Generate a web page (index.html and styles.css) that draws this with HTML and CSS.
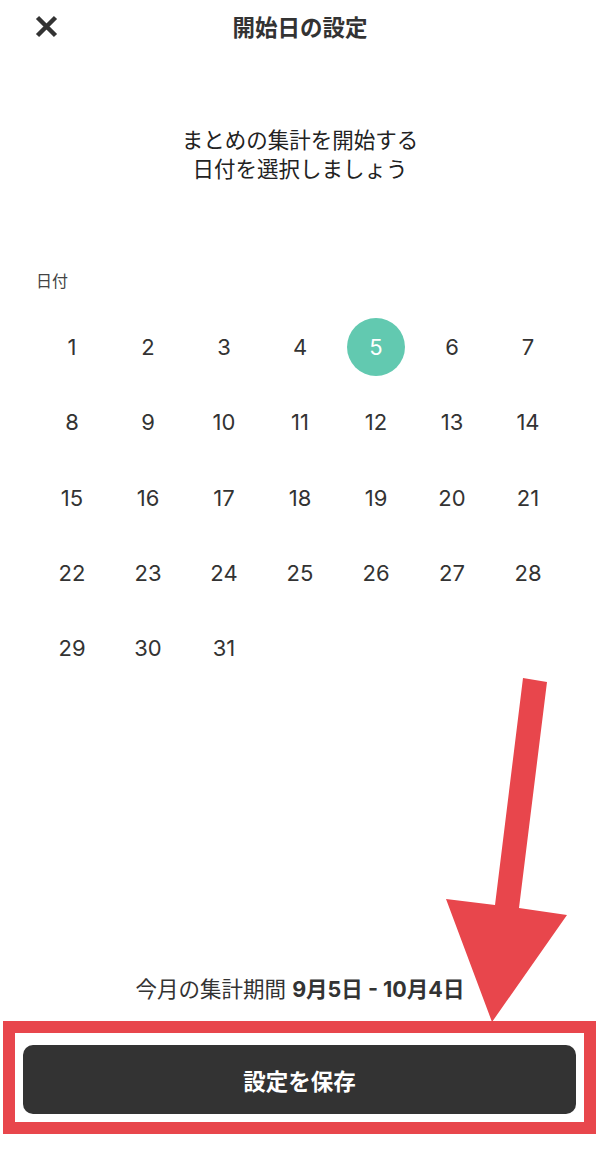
FILE: index.html
```html
<!DOCTYPE html>
<html lang="ja">
<head>
<meta charset="utf-8">
<title>開始日の設定</title>
<link rel="stylesheet" href="styles.css">
</head>
<body>
<div class="page">
  <header class="header">
    <button class="close" aria-label="閉じる">
      <svg width="23" height="23" viewBox="0 0 23 23"><path d="M2.5 2.5L20.5 20.5M20.5 2.5L2.5 20.5" stroke="#333" stroke-width="4.5" stroke-linecap="butt"/></svg>
    </button>
    <h1 class="title">開始日の設定</h1>
    <span></span>
  </header>

  <p class="lead">まとめの集計を開始する<br>日付を選択しましょう</p>

  <div class="label">日付</div>

  <div class="days">
    <span class="day">1</span><span class="day">2</span><span class="day">3</span><span class="day">4</span><span class="day selected">5</span><span class="day">6</span><span class="day">7</span>
    <span class="day">8</span><span class="day">9</span><span class="day">10</span><span class="day">11</span><span class="day">12</span><span class="day">13</span><span class="day">14</span>
    <span class="day">15</span><span class="day">16</span><span class="day">17</span><span class="day">18</span><span class="day">19</span><span class="day">20</span><span class="day">21</span>
    <span class="day">22</span><span class="day">23</span><span class="day">24</span><span class="day">25</span><span class="day">26</span><span class="day">27</span><span class="day">28</span>
    <span class="day">29</span><span class="day">30</span><span class="day">31</span>
  </div>

  <p class="period">今月の集計期間 <b>9月5日 - 10月4日</b></p>

  <div class="highlight">
    <button class="save">設定を保存</button>
  </div>

  <svg class="arrow" width="600" height="1167" viewBox="0 0 600 1167">
    <polygon points="523,678 547,682 519,908 567,915 492,1022 446,899 495,905" fill="#e8464c"/>
  </svg>
</div>
</body>
</html>
```

FILE: styles.css
```css
* { box-sizing: border-box; }
html, body { margin: 0; padding: 0; background: #fff; }
body {
  font-family: Inter, "Noto Sans CJK JP", sans-serif;
  color: #333;
}
.page {
  position: relative;
  width: 600px;
  height: 1167px;
  display: flex;
  flex-direction: column;
  overflow: hidden;
}
.header {
  height: 52px;
  display: grid;
  grid-template-columns: 1fr auto 1fr;
  align-items: center;
}
.close {
  justify-self: start;
  margin-left: 35px;
  padding: 0;
  border: 0;
  background: none;
  width: 23px;
  height: 23px;
  display: flex;
}
.title {
  margin: 0;
  font-family: "Noto Sans CJK JP", sans-serif;
  font-size: 22.5px;
  font-weight: 700;
  color: #333;
  line-height: 28px;
}
.lead {
  margin: 72px 0 0;
  text-align: center;
  font-family: "Noto Sans CJK JP", sans-serif;
  font-size: 21.5px;
  line-height: 29px;
  color: #222;
}
.label {
  margin: 88px 0 0 36px;
  font-family: "Noto Sans CJK JP", sans-serif;
  font-size: 16px;
  line-height: 20px;
  color: #444;
}
.days {
  margin: 19.4px 34px 0;
  display: grid;
  grid-template-columns: repeat(7, 1fr);
  grid-auto-rows: 75.3px;
}
.day {
  display: flex;
  align-items: center;
  justify-content: center;
  font-size: 22px;
  color: #333;
}
.day.selected {
  justify-self: center;
  align-self: center;
  width: 58px;
  height: 58px;
  border-radius: 50%;
  background: #62c9b0;
  color: #fff;
}
.period {
  margin: auto 0 0;
  text-align: center;
  font-family: Inter, "Noto Sans CJK JP", sans-serif;
  font-size: 21.5px;
  line-height: 26px;
  color: #333;
}
.period b { font-weight: 700; }
.highlight {
  margin: 19px 4px 33px 3px;
  border: 12px solid #e8464c;
  padding: 12px 8px 8px;
}
.save {
  display: block;
  width: 100%;
  height: 69px;
  border: 0;
  border-radius: 10px;
  background: #333;
  color: #fff;
  font-family: "Noto Sans CJK JP", sans-serif;
  font-size: 22.5px;
  font-weight: 700;
}
.arrow {
  position: absolute;
  left: 0;
  top: 0;
  pointer-events: none;
}
```
